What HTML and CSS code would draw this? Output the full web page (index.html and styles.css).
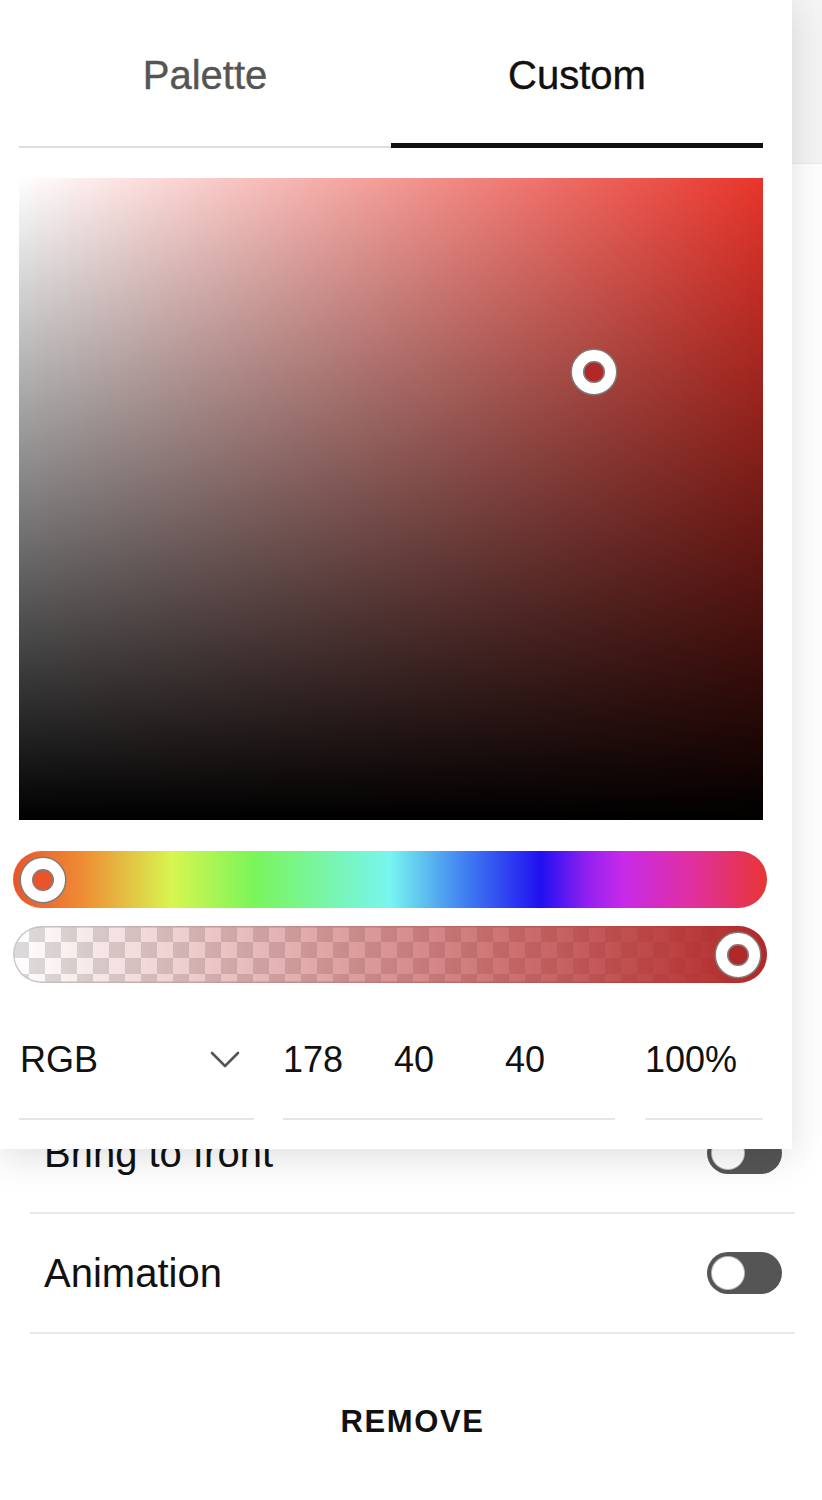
FILE: index.html
```html
<!DOCTYPE html>
<html lang="en">
<head>
<meta charset="utf-8">
<title>Color picker</title>
<link rel="stylesheet" href="styles.css">
</head>
<body>
<div class="page">
  <header class="topbar"></header>
  <div class="panel">
    <div class="list">
      <div class="row"><span class="label">Bring to front</span><span class="toggle"><span class="knob"></span></span></div>
      <div class="row"><span class="label">Animation</span><span class="toggle"><span class="knob"></span></span></div>
    </div>
    <div class="remove">REMOVE</div>
  </div>

  <div class="picker">
    <div class="tabs">
      <div class="tab">Palette</div>
      <div class="tab active">Custom</div>
    </div>
    <div class="sat">
      <div class="handle sat-handle"></div>
    </div>
    <div class="slider hue">
      <div class="handle hue-handle"></div>
    </div>
    <div class="slider alpha">
      <div class="alpha-fill"></div>
      <div class="handle alpha-handle"></div>
    </div>
    <div class="fields">
      <div class="field mode">
        <span>RGB</span>
        <svg class="chevron" width="30" height="18" viewBox="0 0 30 18"><path d="M2 2 L15 15 L28 2" fill="none" stroke="#555" stroke-width="2.6" stroke-linecap="round" stroke-linejoin="round"/></svg>
      </div>
      <div class="field values">
        <span>178</span><span>40</span><span>40</span>
      </div>
      <div class="field pct">100%</div>
    </div>
  </div>
</div>
</body>
</html>
```

FILE: styles.css
```css
html, body {
  margin: 0;
  padding: 0;
  background: #ffffff;
}
body {
  width: 822px;
  font-family: "Liberation Sans", Arial, sans-serif;
  color: #111;
}
.page {
  position: relative;
  min-height: 1500px;
}
.topbar {
  height: 163px;
  background: #f4f4f4;
  border-bottom: 1px solid #ebebeb;
}
.panel {
  margin: 0 27px 0 30px;
}
.list {
  padding-top: 930px;
}
.row {
  height: 120px;
  box-sizing: border-box;
  display: flex;
  align-items: center;
  justify-content: space-between;
  padding: 0 13px 0 14px;
  border-bottom: 2px solid #e8e8e8;
  font-size: 40px;
  color: #111;
}
.toggle {
  width: 75px;
  height: 42px;
  border-radius: 21px;
  background: #555;
  display: flex;
  align-items: center;
  padding-left: 5px;
  box-sizing: border-box;
}
.knob {
  width: 32px;
  height: 32px;
  border-radius: 50%;
  background: #fff;
  box-shadow: 0 0 0 1px #bbb;
}
.remove {
  text-align: center;
  padding-top: 71px;
  font-size: 31px;
  line-height: 34px;
  font-weight: 700;
  letter-spacing: 1.6px;
  color: #111;
}

/* picker popup (overlay) */
.picker {
  position: absolute;
  top: 0;
  left: 0;
  width: 792px;
  box-sizing: border-box;
  padding: 0 29px 29px 19px;
  background: #fff;
  box-shadow: 0 8px 36px rgba(0, 0, 0, 0.13);
}
.tabs {
  display: grid;
  grid-template-columns: 372px 372px;
}
.tab {
  height: 148px;
  box-sizing: border-box;
  padding-top: 52px;
  line-height: 46px;
  text-align: center;
  font-size: 40px;
  color: #555;
  -webkit-text-stroke: 0.4px #555;
  border-bottom: 2px solid #dedede;
}
.tab.active {
  color: #111;
  -webkit-text-stroke: 0.4px #111;
  border-bottom: 5px solid #111;
}
.sat {
  position: relative;
  margin-top: 30px;
  height: 642px;
  background:
    linear-gradient(to top, #000 0%, rgba(0, 0, 0, 0) 100%),
    linear-gradient(to right, #fff 0%, rgba(255, 255, 255, 0) 100%),
    #e8352b;
}
.handle {
  position: absolute;
  width: 44px;
  height: 44px;
  box-sizing: border-box;
  border-radius: 50%;
  border: 11px solid #fff;
  box-shadow: 0 0 0 1.5px #7d7d7d, inset 0 0 0 1.5px #7d7d7d;
  transform: translate(-50%, -50%);
}
.sat-handle {
  left: 77.3%;
  top: 30.2%;
  background: rgb(178, 40, 40);
}
.slider {
  position: relative;
  height: 57px;
  border-radius: 29px;
  margin: 0 -4px 0 -6px;
}
.hue {
  margin-top: 31px;
  background: linear-gradient(to right,
    #e8552c 0%, #ef8a35 9%, #d8f550 21%, #7af55a 32%, #78f5f0 50%,
    #3f7ff0 60%, #2010f0 70%, #9020f0 76%, #c82ae8 81%, #e030a0 90%, #e83535 100%);
}
.hue-handle {
  left: 30px;
  top: 50%;
  background: #e8552c;
}
.alpha {
  margin-top: 18px;
  background-color: #fff;
  background-image:
    linear-gradient(45deg, #dcdcdc 25%, transparent 25%, transparent 75%, #dcdcdc 75%),
    linear-gradient(45deg, #dcdcdc 25%, transparent 25%, transparent 75%, #dcdcdc 75%);
  background-size: 32px 32px;
  background-position: 0 0, 16px 16px;
  box-shadow: inset 0 0 0 1.5px #c8c8c8;
}
.alpha-fill {
  height: 100%;
  border-radius: 29px;
  background: linear-gradient(to right, rgba(178, 40, 40, 0) 0%, rgba(178, 40, 40, 1) 100%);
}
.alpha-handle {
  left: 725px;
  top: 50%;
  background: rgb(178, 40, 40);
}
.fields {
  display: flex;
  margin-top: 40px;
}
.field {
  box-sizing: border-box;
  height: 97px;
  line-height: 74px;
  padding-bottom: 21px;
  border-bottom: 2px solid #e6e6e6;
  font-size: 36px;
  color: #111;
}
.mode {
  width: 235px;
  display: flex;
  align-items: center;
  justify-content: space-between;
  padding-left: 1px;
  padding-right: 14px;
}
.chevron {
  display: block;
}
.values {
  width: 332px;
  margin-left: 29px;
  display: grid;
  grid-template-columns: 111px 111px 110px;
}
.pct {
  width: 118px;
  margin-left: 30px;
}
```
